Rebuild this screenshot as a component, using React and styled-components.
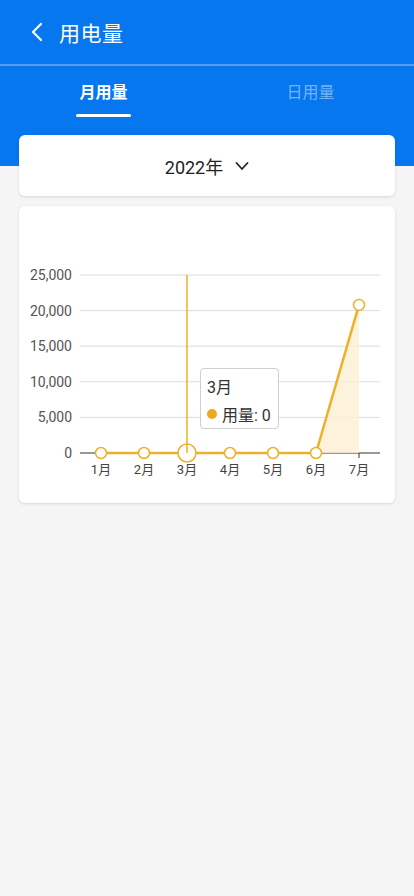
import React, { useState } from "react";
import styled, { createGlobalStyle } from "styled-components";

const GlobalStyle = createGlobalStyle`
  html, body {
    margin: 0;
    padding: 0;
    background: #f5f5f5;
    font-family: Roboto, "Noto Sans CJK SC", sans-serif;
  }
  * { box-sizing: border-box; }
`;

const BLUE = "#0777f0";
const GOLD = "#eeb027";

const StyledPage = styled.div`
  width: 414px;
  min-height: 896px;
  background: #f5f5f5;
`;

const StyledHeader = styled.div`
  height: 66px;
  background: ${BLUE};
  display: flex;
  align-items: center;
  padding-left: 30px;
  padding-bottom: 1px;
  gap: 15px;
  color: #fff;
  border-bottom: 2px solid #5a9ce6;
`;

const StyledTitle = styled.div`
  font-size: 21px;
  font-family: "Noto Sans CJK SC", sans-serif;
  letter-spacing: 0.5px;
`;

const StyledTabsArea = styled.div`
  background: ${BLUE};
  height: 100px;
`;

const StyledTabs = styled.div`
  display: flex;
  height: 51px;
`;

const StyledTab = styled.div`
  flex: 1;
  display: flex;
  flex-direction: column;
  align-items: center;
  justify-content: flex-end;
  font-family: "Noto Sans CJK SC", sans-serif;
  font-size: 16px;
  font-weight: ${(p) => (p.$active ? 700 : 400)};
  color: ${(p) => (p.$active ? "#fff" : "rgba(255,255,255,0.45)")};
  cursor: pointer;
`;

const StyledTabLabel = styled.div`
  line-height: 22px;
  margin-bottom: 12px;
`;

const StyledUnderline = styled.div`
  width: 55px;
  height: 3px;
  border-radius: 2px;
  background: ${(p) => (p.$active ? "#fff" : "transparent")};
`;

const StyledContent = styled.div`
  margin-top: -31px;
  padding: 0 19px;
  display: flex;
  flex-direction: column;
  gap: 10px;
`;

const StyledCard = styled.div`
  background: #fff;
  border-radius: 6px;
  box-shadow: 0 1px 3px rgba(0, 0, 0, 0.12);
  position: relative;
`;

const StyledYearCard = styled(StyledCard)`
  height: 61px;
  display: flex;
  align-items: center;
  justify-content: center;
  gap: 12px;
  font-size: 18px;
  color: #222;
`;

const StyledYear = styled.span`
  font-family: Roboto, "Noto Sans CJK SC", sans-serif;
`;

const StyledChartCard = styled(StyledCard)`
  height: 297px;
`;

const StyledTooltip = styled.div`
  position: absolute;
  left: 181px;
  top: 162px;
  width: 79px;
  height: 61px;
  border: 1px solid #cfcfcf;
  border-radius: 4px;
  background: rgba(255, 255, 255, 0.95);
  padding: 5px 0 0 6px;
  color: #333;
  font-size: 16px;
  font-family: Roboto, "Noto Sans CJK SC", sans-serif;
`;

const StyledTipRow = styled.div`
  display: flex;
  align-items: center;
  gap: 5px;
  margin-top: 4px;
`;

const StyledDot = styled.span`
  width: 10px;
  height: 10px;
  border-radius: 50%;
  background: #f0a81c;
`;

const months = ["1月", "2月", "3月", "4月", "5月", "6月", "7月"];
const values = [0, 0, 0, 0, 0, 0, 20800];
const ticks = [0, 5000, 10000, 15000, 20000, 25000];

const x0 = 101;
const step = 43;
const yZero = 453;
const yScale = 178 / 25000;

const px = (i) => x0 + i * step;
const py = (v) => yZero - v * yScale;

const Chart = () => {
  const pts = values.map((v, i) => `${px(i)},${py(v)}`).join(" ");
  return (
    <svg width="376" height="297" viewBox="19 206 376 297" style={{ display: "block" }}>
      {ticks.map((t) => (
        <g key={t}>
          {t > 0 && <line x1="80" x2="380" y1={py(t)} y2={py(t)} stroke="#dcdcdc" strokeWidth="1" />}
          <text
            x="72"
            y={py(t) + 5}
            textAnchor="end"
            fontSize="14"
            fill="#555"
            fontFamily="Roboto, sans-serif"
          >
            {t.toLocaleString("en-US")}
          </text>
        </g>
      ))}
      <line x1="80" x2="380" y1={yZero} y2={yZero} stroke="#333" strokeWidth="1" />
      {months.map((m, i) => (
        <g key={m}>
          <line x1={px(i)} x2={px(i)} y1={yZero} y2={yZero + 5} stroke="#333" strokeWidth="1" />
          <text
            x={px(i)}
            y="474"
            textAnchor="middle"
            fontSize="13"
            fill="#444"
            fontFamily="Roboto, 'Noto Sans CJK SC', sans-serif"
          >
            {m}
          </text>
        </g>
      ))}
      <polygon
        points={`${px(5)},${yZero} ${px(6)},${py(values[6])} ${px(6)},${yZero}`}
        fill="#fdf0d5"
        opacity="0.8"
      />
      <line x1={px(2)} x2={px(2)} y1="275" y2={yZero} stroke={GOLD} strokeWidth="1.5" />
      <polyline points={pts} fill="none" stroke={GOLD} strokeWidth="2.5" strokeLinejoin="round" />
      {values.map((v, i) => (
        <circle
          key={i}
          cx={px(i)}
          cy={py(v)}
          r={i === 2 ? 9 : 5.5}
          fill="#fff"
          stroke={GOLD}
          strokeWidth="1.5"
        />
      ))}
      <line x1={px(2)} x2={px(2)} y1={yZero - 9} y2={yZero} stroke={GOLD} strokeWidth="1.5" />
    </svg>
  );
};

const App = () => {
  const [tab, setTab] = useState(0);

  return (
    <StyledPage>
      <GlobalStyle />
      <StyledHeader>
        <svg width="14" height="20" viewBox="0 0 14 20">
          <path d="M11 2 L3 10 L11 18" fill="none" stroke="#fff" strokeWidth="2.2" strokeLinecap="round" strokeLinejoin="round" />
        </svg>
        <StyledTitle>用电量</StyledTitle>
      </StyledHeader>
      <StyledTabsArea>
        <StyledTabs>
          {["月用量", "日用量"].map((t, i) => (
            <StyledTab key={t} $active={tab === i} onClick={() => setTab(i)}>
              <StyledTabLabel>{t}</StyledTabLabel>
              <StyledUnderline $active={tab === i} />
            </StyledTab>
          ))}
        </StyledTabs>
      </StyledTabsArea>
      <StyledContent>
        <StyledYearCard>
          <StyledYear>2022年</StyledYear>
          <svg width="14" height="10" viewBox="0 0 14 10">
            <path d="M1.5 2 L7 8 L12.5 2" fill="none" stroke="#222" strokeWidth="1.8" strokeLinecap="round" strokeLinejoin="round" />
          </svg>
        </StyledYearCard>
        <StyledChartCard>
          <Chart />
          <StyledTooltip>
            <div>3月</div>
            <StyledTipRow>
              <StyledDot />
              <span>用量: 0</span>
            </StyledTipRow>
          </StyledTooltip>
        </StyledChartCard>
      </StyledContent>
    </StyledPage>
  );
};

export default App;
